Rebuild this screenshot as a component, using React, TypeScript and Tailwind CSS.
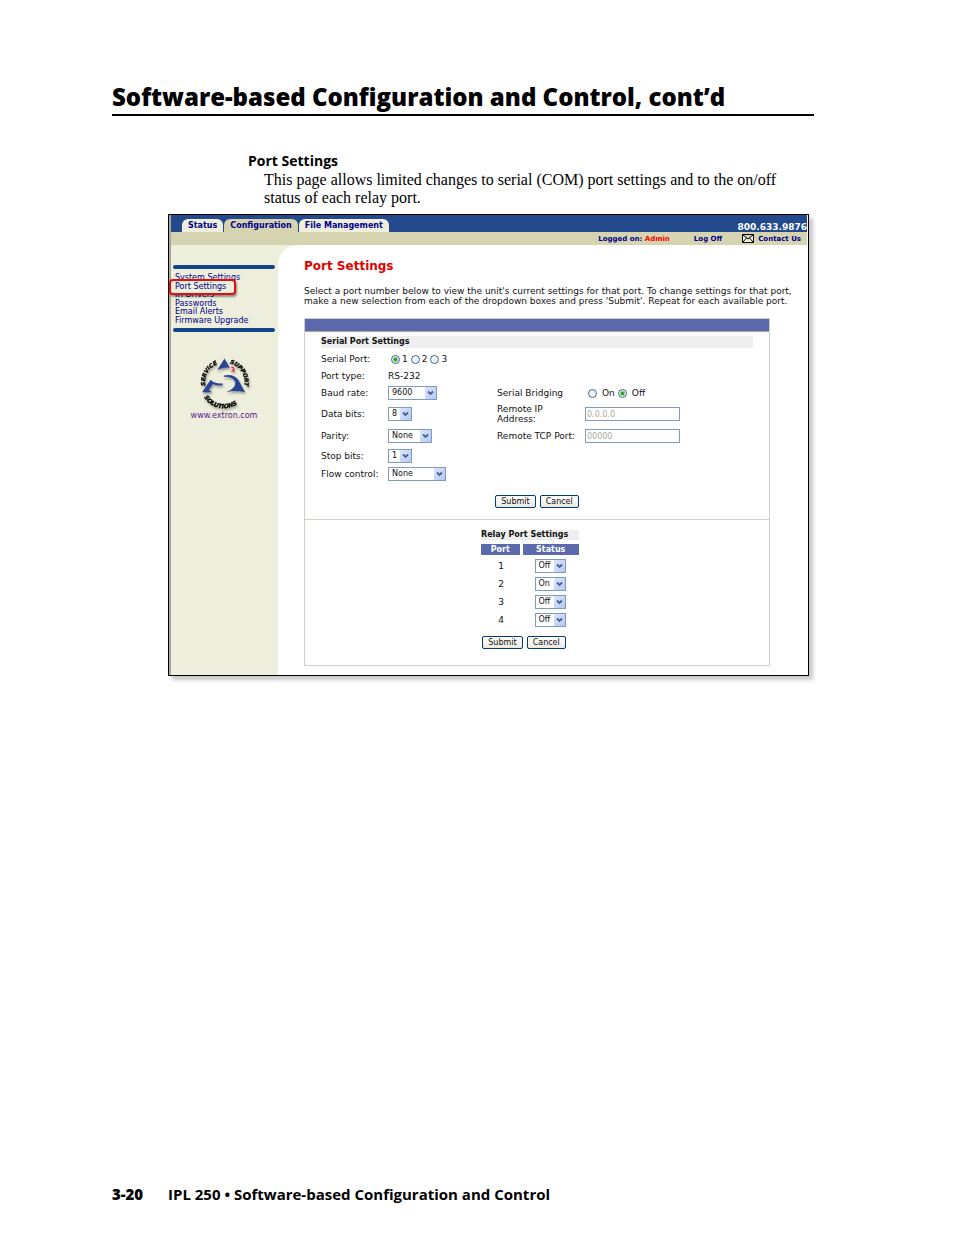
import React, { useState } from 'react';
import clsx from 'clsx';

const TABS = ['Status', 'Configuration', 'File Management'];

const LINKS = [
  'System Settings',
  'Port Settings',
  'IR Drivers',
  'Passwords',
  'Email Alerts',
  'Firmware Upgrade',
];

const RELAYS = [
  { port: 1, status: 'Off' },
  { port: 2, status: 'On' },
  { port: 3, status: 'Off' },
  { port: 4, status: 'Off' },
];

interface SelectProps {
  id: string;
  value: string;
  options: string[];
  width: string;
  label?: string;
}

function Select({ id, value, options, width, label }: SelectProps) {
  const [current, setCurrent] = useState(value);
  return (
    <span className={clsx('relative block h-[14px]', width)}>
      <select
        id={id}
        aria-label={label}
        value={current}
        onChange={(e) => setCurrent(e.target.value)}
        className="block h-full w-full appearance-none border border-[#7f9db9] bg-white pl-[3px] text-[8px] leading-[12px] text-[#111]"
      >
        {options.map((o) => (
          <option key={o}>{o}</option>
        ))}
      </select>
      <svg
        viewBox="0 0 11 12"
        className="pointer-events-none absolute top-px right-px h-[12px] w-[11px] bg-linear-to-br from-[#dbe6fe] to-[#b4c8f8]"
      >
        <path d="M3 4.5 L5.5 7 L8 4.5" fill="none" stroke="#4d6185" strokeWidth="1.8" />
      </svg>
    </span>
  );
}

interface RadioProps {
  name: string;
  label: string;
  checked: boolean;
  onChange: () => void;
  gap: string;
}

function Radio({ name, label, checked, onChange, gap }: RadioProps) {
  return (
    <label className={clsx('flex items-center', gap)}>
      <input
        type="radio"
        name={name}
        checked={checked}
        onChange={onChange}
        className="size-[9px] appearance-none rounded-full border border-[#3f6a94] bg-[#f1f1ee] checked:bg-[radial-gradient(circle,#21a121_0_1px,#f1f1ee_3px)]"
      />
      {label}
    </label>
  );
}

function Buttons() {
  return (
    <div className="flex justify-center gap-1">
      {['Submit', 'Cancel'].map((text) => (
        <button
          key={text}
          type="button"
          className="h-[13px] rounded-xs border border-[#003c74] bg-linear-to-b from-white to-[#ece9dd] px-[5px] text-[8px] leading-[10px] text-[#111]"
        >
          {text}
        </button>
      ))}
    </div>
  );
}

function Logo() {
  return (
    <svg
      viewBox="105 80 145 150"
      className="mx-auto h-[50px] w-[48px] overflow-visible drop-shadow-[1px_2px_1px_rgba(0,0,0,0.35)]"
      role="img"
      aria-label="Service Support Solutions"
    >
      <defs>
        <path id="arc-service" d="M121 166 A60 60 0 0 1 163 99" />
        <path id="arc-support" d="M195 99 A60 60 0 0 1 236 178" />
        <path id="arc-solutions" d="M117 201 A70 70 0 0 0 242 190" />
      </defs>
      <g fill="#2b4694">
        <path d="M179 84 L195 112 Q177 108 157 119 Z" />
        <path d="M137 148 Q150 161 173 159 L173 165 Q155 168 144 161 L131 180 Q139 181 141 186 L111 186 Z" />
        <path d="M177 135 Q207 129 221 149 L241 186 Q213 179 184 186 Q211 175 212 157 Q208 139 177 139 Z" />
      </g>
      <g fontFamily="DejaVu Sans" fontWeight="bold" fontStyle="italic" fontSize="17" fill="#000" stroke="#000">
        <text>
          <textPath href="#arc-service">SERVICE</textPath>
        </text>
        <text>
          <textPath href="#arc-support">SUPPORT</textPath>
        </text>
        <text fontSize="18">
          <textPath href="#arc-solutions">SOLUTIONS</textPath>
        </text>
      </g>
      <text x="197" y="125" fontFamily="DejaVu Sans" fontWeight="bold" fontSize="20" fill="#e8132b">
        3
      </text>
    </svg>
  );
}

function TopBar() {
  return (
    <header>
      <div className="flex h-[17px] items-end justify-between bg-[#224a8c] pl-[11px]">
        <nav className="flex items-end gap-px">
          {TABS.map((tab) => (
            <a
              key={tab}
              href="#"
              className={clsx(
                'rounded-t-md px-[6px] text-[8px] leading-[13px] font-bold text-[#00008b]',
                tab === 'Configuration' ? 'bg-[#d6d3b1]' : 'bg-[#eeeedd]'
              )}
            >
              {tab}
            </a>
          ))}
        </nav>
        <span className="text-[9px] leading-[9px] font-bold text-white">800.633.9876</span>
      </div>
      <div className="flex h-[13px] items-center justify-end bg-[#d6d3b1] pr-[6px] text-[7px] font-bold text-[#00008b]">
        <span>
          Logged on: <span className="text-[#f00]">Admin</span>
        </span>
        <a href="#" className="ml-6">
          Log Off
        </a>
        <a href="#" className="ml-5 flex items-center gap-1">
          <svg viewBox="0 0 12 9" className="h-[9px] w-[12px]" fill="#eeeedd" stroke="#000">
            <path d="M.5 .5 H11.5 V8.5 H.5 Z M.5 .5 L6 5 L11.5 .5 M.5 8.5 L4.5 4 M11.5 8.5 L7.5 4" />
          </svg>
          Contact Us
        </a>
      </div>
    </header>
  );
}

function Sidebar() {
  return (
    <aside className="w-[107px] shrink-0 pt-5 pr-[3px] pl-[2px]">
      <div className="h-1 rounded-xs bg-[#124489]" />
      <nav className="mt-[5px] mb-[3px] flex h-[51px] flex-col justify-between pl-[2px] text-[8px] leading-[8px] text-[#00008b]">
        {LINKS.map((link) =>
          link === 'Port Settings' ? (
            <a key={link} href="#" className="relative z-10">
              {/* highlighted entry, drawn over its neighbours */}
              <span className="absolute -top-1 -left-[6px] h-4 w-[67px] rounded-sm border-2 border-[#e01010] bg-[#eeeedd] shadow-[1px_2px_2px_rgba(0,0,0,0.4)]" />
              <span className="relative">{link}</span>
            </a>
          ) : (
            <a key={link} href="#">
              {link}
            </a>
          )
        )}
      </nav>
      <div className="h-1 rounded-xs bg-[#124489]" />
      <div className="mt-[25px] text-center">
        <Logo />
        <a href="#" className="mt-1 block text-[8px] leading-[10px] text-[#551a8b]">
          www.extron.com
        </a>
      </div>
    </aside>
  );
}

function SerialSettings() {
  const [port, setPort] = useState('1');
  const [bridging, setBridging] = useState('Off');

  return (
    <section className="border-b border-[#d0d0c8] px-4 pt-1 pb-[11px]">
      <h3 className="bg-[#eee] text-[8px] leading-[12px] font-bold">Serial Port Settings</h3>
      <div className="mt-px mb-[11px] grid grid-cols-[67px_109px_88px_auto] grid-rows-[20px_14px_20px_22px_22px_17px_20px] items-center">
        <span>Serial Port:</span>
        <div className="col-span-3 flex gap-[3px] pl-[3px]">
          {['1', '2', '3'].map((n) => (
            <Radio
              key={n}
              name="port"
              label={n}
              checked={port === n}
              onChange={() => setPort(n)}
              gap="gap-[2px]"
            />
          ))}
        </div>

        <span>Port type:</span>
        <span className="col-span-3">RS-232</span>

        <label htmlFor="baud">Baud rate:</label>
        <Select id="baud" value="9600" options={['9600', '19200', '38400']} width="w-[49px]" />
        <span>Serial Bridging</span>
        <div className="flex gap-[3px] pl-[3px]">
          {['On', 'Off'].map((s) => (
            <Radio
              key={s}
              name="bridging"
              label={s}
              checked={bridging === s}
              onChange={() => setBridging(s)}
              gap="gap-[5px]"
            />
          ))}
        </div>

        <label htmlFor="data">Data bits:</label>
        <Select id="data" value="8" options={['7', '8']} width="w-[24px]" />
        <label htmlFor="ip" className="leading-[10px]">
          Remote IP
          <br />
          Address:
        </label>
        <input
          id="ip"
          disabled
          value="0.0.0.0"
          className="h-[14px] w-[95px] border border-[#7f9db9] bg-white px-px text-[8px] leading-[12px] text-[#aca899]"
        />

        <label htmlFor="parity">Parity:</label>
        <Select id="parity" value="None" options={['None', 'Odd', 'Even']} width="w-[44px]" />
        <label htmlFor="tcp">Remote TCP Port:</label>
        <input
          id="tcp"
          disabled
          value="00000"
          className="h-[14px] w-[95px] border border-[#7f9db9] bg-white px-px text-[8px] leading-[12px] text-[#aca899]"
        />

        <label htmlFor="stop">Stop bits:</label>
        <Select id="stop" value="1" options={['1', '2']} width="col-span-3 w-[24px]" />

        <label htmlFor="flow">Flow control:</label>
        <Select
          id="flow"
          value="None"
          options={['None', 'Hardware', 'Software']}
          width="col-span-3 w-[58px]"
        />
      </div>
      <Buttons />
    </section>
  );
}

function RelaySettings() {
  return (
    <section className="flex flex-col items-center pt-[10px] pr-[14px] pb-4">
      <div className="mb-[9px] w-[98px]">
        <h3 className="bg-[#eee] text-[8px] leading-[10px] font-bold whitespace-nowrap">
          Relay Port Settings
        </h3>
        <table className="mt-1 w-full text-center">
          <thead>
            <tr className="text-[8px] leading-[11px] text-white">
              <th className="w-[40px] border-r-3 border-white bg-[#5b6aad]">Port</th>
              <th className="bg-[#5b6aad]">Status</th>
            </tr>
          </thead>
          <tbody>
            {RELAYS.map((r) => (
              <tr key={r.port} className="h-[18px]">
                <td className="pt-1">{r.port}</td>
                <td className="pt-1">
                  <Select
                    id={`relay-${r.port}`}
                    label={`Relay ${r.port} status`}
                    value={r.status}
                    options={['Off', 'On']}
                    width="mx-auto w-[31px]"
                  />
                </td>
              </tr>
            ))}
          </tbody>
        </table>
      </div>
      <div className="pr-3">
        <Buttons />
      </div>
    </section>
  );
}

function Screen() {
  return (
    <div className="mt-[7px] mr-[5px] ml-14 border border-black bg-white font-['DejaVu_Sans',sans-serif] text-[9px] leading-[10px] text-[#111] shadow-[4px_4px_4px_rgba(0,0,0,0.22)]">
      <div className="mr-px border-l-2 border-[#aca899]">
        <TopBar />
        <div className="flex bg-[#eeeedd]">
          <Sidebar />
          <main className="min-w-0 grow rounded-tl-[20px] bg-white pt-[13px] pr-[37px] pb-[9px] pl-[26px]">
            <h2 className="text-[12px] leading-[16px] font-bold text-[#e00000]">Port Settings</h2>
            <p className="mt-3 leading-[10px] whitespace-nowrap">
              Select a port number below to view the unit's current settings for that port. To change settings for that port,
              <br />
              make a new selection from each of the dropdown boxes and press 'Submit'. Repeat for each available port.
            </p>
            <div className="mt-3 border border-[#d0d0c8]">
              <div className="h-[13px] border-b border-[#aca899] bg-[#5b6aad]" />
              <SerialSettings />
              <RelaySettings />
            </div>
          </main>
        </div>
      </div>
    </div>
  );
}

function App() {
  return (
    <div className="flex min-h-screen flex-col bg-white pt-20 pr-[140px] pb-8 pl-28 font-['Open_Sans',sans-serif] text-black">
      <h1 className="border-b-2 border-black text-[24px] leading-[34px] font-extrabold whitespace-nowrap">
        Software-based Configuration and Control, cont’d
      </h1>
      <section className="mt-9 pl-[136px]">
        <h2 className="text-[14px] leading-[18px] font-bold">Port Settings</h2>
        <p className="mt-px pl-4 font-['Palatino_Linotype','Liberation_Serif',serif] text-[16px] leading-[18px] whitespace-nowrap">
          This page allows limited changes to serial (COM) port settings and to the on/off
          <br />
          status of each relay port.
        </p>
      </section>
      <Screen />
      <footer className="mt-auto flex text-[15px] leading-[18px] font-bold">
        <span className="w-14 font-extrabold">3-20</span>
        <span>IPL 250 • Software-based Configuration and Control</span>
      </footer>
    </div>
  );
}

export default App;
